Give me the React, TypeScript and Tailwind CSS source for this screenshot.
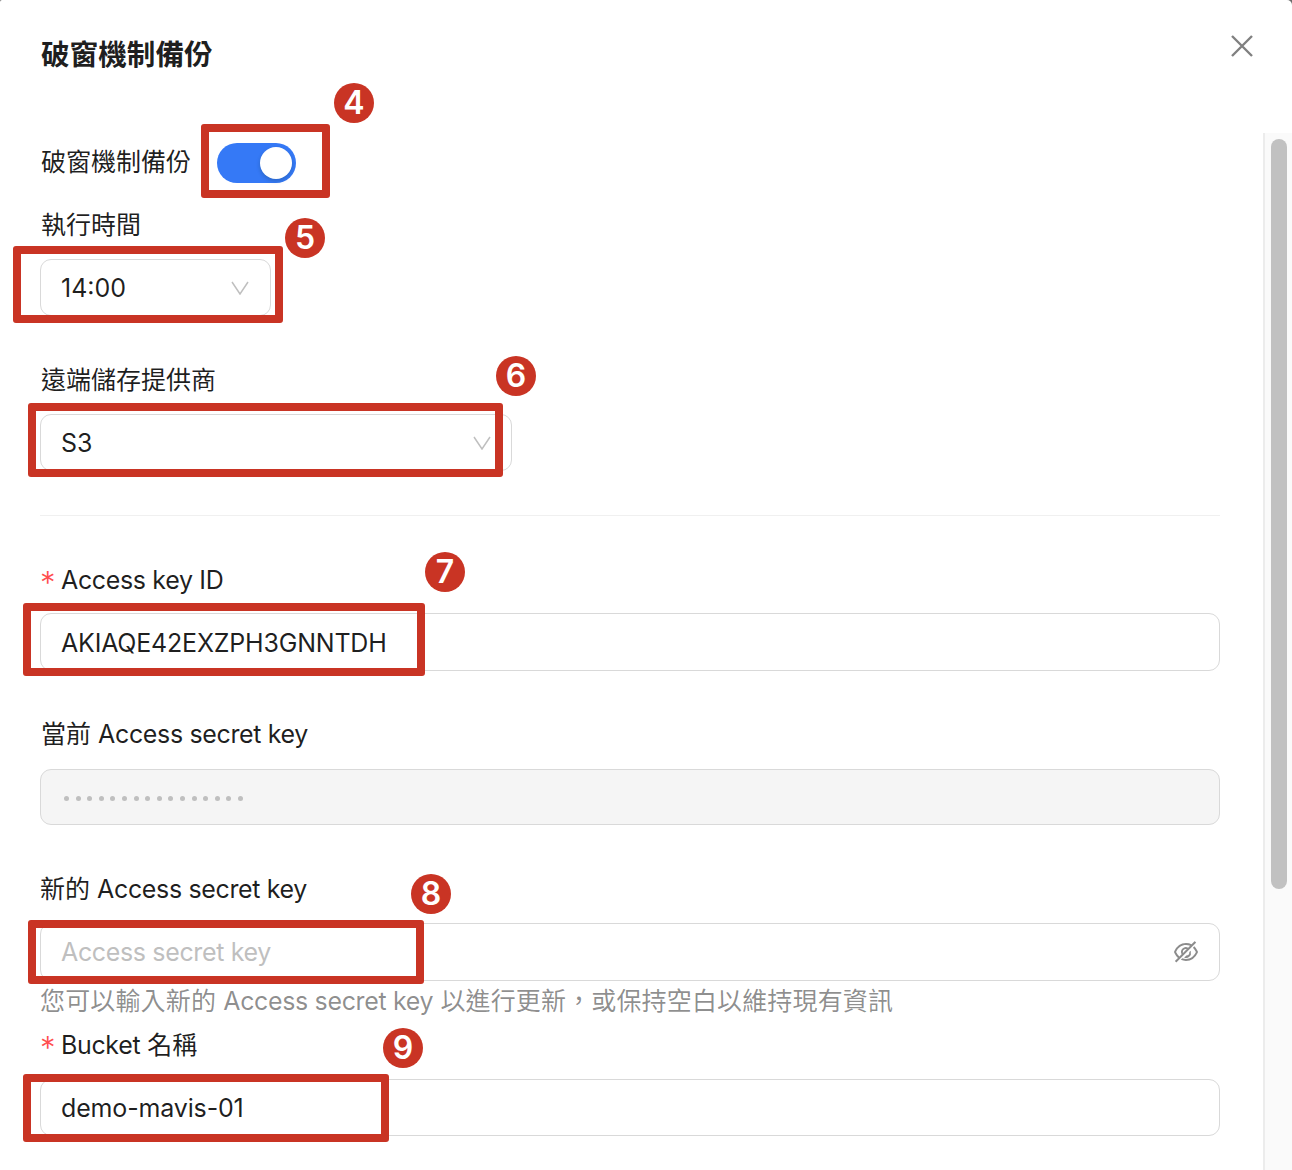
import React from 'react';

const EYE_OFF =
  'M942.2 486.2Q889.47 375.11 816.7 305l-50.88 50.88C807.31 395.53 843.45 447.4 874.7 512 791.5 684.2 673.4 766 512 766q-72.67 0-133.87-22.38L323 798.75Q408 838 512 838q288.3 0 430.2-300.3a60.29 60.29 0 000-51.5zm-63.57-320.64L836 122.88a8 8 0 00-11.32 0L715.31 232.2Q624.86 186 512 186q-288.3 0-430.2 300.3a60.3 60.3 0 000 51.5q56.69 119.4 136.5 191.41L112.48 835a8 8 0 000 11.31L155.17 889a8 8 0 0011.31 0l712.15-712.12a8 8 0 000-11.32zM149.3 512C232.6 339.8 350.7 258 512 258c54.54 0 104.13 9.36 149.12 28.39l-70.3 70.3a176 176 0 00-238.13 238.13l-83.42 83.42C223.1 637.49 183.3 582.28 149.3 512zm246.7 0a112.11 112.11 0 01146.2-106.69L401.31 546.2A112 112 0 01396 512z M508 666c-4.94 0-9.81-.23-14.62-.67l-49.54 49.54A176.07 176.07 0 00688 508c0-16-2.14-31.49-6.13-46.21l-49.55 49.54c.44 4.81.68 9.68.68 14.67a112 112 0 01-112 112z';

const Chevron = () => (
  <svg viewBox="0 0 18 14" className="-mt-[2px] w-[18px] h-[14px] text-[#bfbfbf]" fill="none" stroke="currentColor" strokeWidth="1.5">
    <path d="M1 1l8 12 8-12" />
  </svg>
);

const Label = ({ children, required, className }: { children: React.ReactNode; required?: boolean; className: string }) => (
  <div className={`h-[34px] pt-[2px] flex items-center text-[25px] text-[#000000e0] ${className}`}>
    {required && <span className="w-[21px] h-[24px] text-[#ff4d4f] text-[31px] font-light leading-[27px]">*</span>}
    <span>{children}</span>
  </div>
);

const Latin = ({ children }: { children: React.ReactNode }) => <span className="tracking-[-0.35px]">{children}</span>;

const Box = ({ className, children }: { className: string; children?: React.ReactNode }) => (
  <div className={`flex items-center border border-[#d9d9d9] rounded-[11px] pl-[20px] pt-[2px] text-[25px] text-[#000000e0] ${className}`}>
    {children}
  </div>
);

const Select = ({ value, className, arrow }: { value: string; className: string; arrow: string }) => (
  <Box className={`justify-between ${arrow} ${className}`}>
    <span>{value}</span>
    <Chevron />
  </Box>
);

// annotation rectangles and numbered markers on top of the form
const marks = [
  { box: 'left-[201px] top-[124px] w-[129px] h-[74px]', n: '4', dot: 'left-[334px] top-[83px]' },
  { box: 'left-[13px] top-[246px] w-[270px] h-[77px]', n: '5', dot: 'left-[285px] top-[218px]' },
  { box: 'left-[28px] top-[403px] w-[475px] h-[74px]', n: '6', dot: 'left-[496px] top-[356px]' },
  { box: 'left-[23px] top-[603px] w-[402px] h-[73px]', n: '7', dot: 'left-[425px] top-[552px]' },
  { box: 'left-[28px] top-[920px] w-[396px] h-[64px]', n: '8', dot: 'left-[411px] top-[874px]' },
  { box: 'left-[23px] top-[1074px] w-[366px] h-[68px]', n: '9', dot: 'left-[383px] top-[1028px]' },
];

const App: React.FC = () => {
  return (
    <div className="w-[1292px] h-[1170px] overflow-hidden bg-[#6b6b6b]">
      <div className="relative w-full h-full bg-white rounded-tl-[2px] rounded-tr-[5px] font-['Inter','Noto_Sans_CJK_TC',sans-serif]">
        <header className="h-[133px] pl-[41px] pr-[38px] flex justify-between items-start">
          <h1 className="mt-[37px] text-[28.6px] leading-[36px] font-bold text-[#000000e0]">破窗機制備份</h1>
          <svg viewBox="0 0 24 24" className="mt-[34px] w-[24px] h-[24px] text-[#808080]" fill="none" stroke="currentColor" strokeWidth="2.4">
            <path d="M2 2l20 20M22 2L2 22" />
          </svg>
        </header>

        <div className="flex h-[1037px]">
          <main className="w-[1220px] pl-[40px] shrink-0">
            <div className="mt-[10px] h-[40px] flex items-center">
              <span className="text-[25px] text-[#000000e0] pl-px">破窗機制備份</span>
              <div className="ml-[26px] w-[79px] h-[40px] rounded-full bg-[#3579f6] flex items-center justify-end pr-[4px]">
                <div className="w-[32px] h-[32px] rounded-full bg-white shadow-[0_2px_4px_rgba(0,35,11,0.2)]" />
              </div>
            </div>

            <Label className="mt-[25px] mb-[17px] pl-px">執行時間</Label>
            <Select value="14:00" className="w-[231px] h-[57px]" arrow="pr-[21px]" />

            <Label className="mt-[47px] mb-[17px] pl-px">遠端儲存提供商</Label>
            <Select value="S3" className="w-[472px] h-[57px]" arrow="pr-[20px]" />

            <div className="mt-[44px] h-px bg-[#f0f0f0]" />

            <Label required className="mt-[47px] mb-[16px]"><Latin>Access key ID</Latin></Label>
            <Box className="h-[58px] pt-[4px] tracking-[-0.2px]">AKIAQE42EXZPH3GNNTDH</Box>

            <Label className="mt-[46px] mb-[18px] pl-px">當前 <Latin>Access secret key</Latin></Label>
            <Box className="h-[56px] bg-[#f5f5f5] pl-[23px] gap-[6.6px]">
              {Array.from({ length: 16 }).map((_, i) => (
                <span key={i} className="w-[5px] h-[5px] rounded-full bg-[#bfbfbf]" />
              ))}
            </Box>

            <Label className="mt-[47px] mb-[17px]">新的 <Latin>Access secret key</Latin></Label>
            <Box className="h-[58px] justify-between pr-[19px]">
              <span className="text-[#bfbfbf]"><Latin>Access secret key</Latin></span>
              <svg viewBox="0 0 1024 1024" className="-mt-[2px] w-[28px] h-[28px] text-[#8c8c8c]" fill="currentColor">
                <path d={EYE_OFF} />
              </svg>
            </Box>
            <div className="mt-[3px] h-[34px] pt-[2px] flex items-center text-[25px] text-[#00000073] tracking-[0.15px] whitespace-pre">
              <span>
                您可以輸入新的 <Latin>Access secret key</Latin> 以進行更新，或保持空白以維持現有資訊
              </span>
            </div>

            <Label required className="mt-[10px] mb-[17px]"><Latin>Bucket</Latin> 名稱</Label>
            <Box className="h-[57px] tracking-[-0.15px]">demo-mavis-01</Box>
          </main>

          <div className="ml-auto w-[29px] border-l-2 border-[#ececec] bg-[#fafafa] pt-[6px] pl-[6px]">
            <div className="w-[16px] h-[750px] rounded-full bg-[#c1c1c1]" />
          </div>
        </div>

        {marks.map((m) => (
          <React.Fragment key={m.n}>
            <div className={`absolute border-[8px] border-[#c93424] rounded-[3px] ${m.box}`} />
            <div className={`absolute w-[40px] h-[40px] rounded-full bg-[#c93424] text-white text-[32px] font-semibold flex items-center justify-center ${m.dot}`}>
              {m.n}
            </div>
          </React.Fragment>
        ))}
      </div>
    </div>
  );
};

export default App;
